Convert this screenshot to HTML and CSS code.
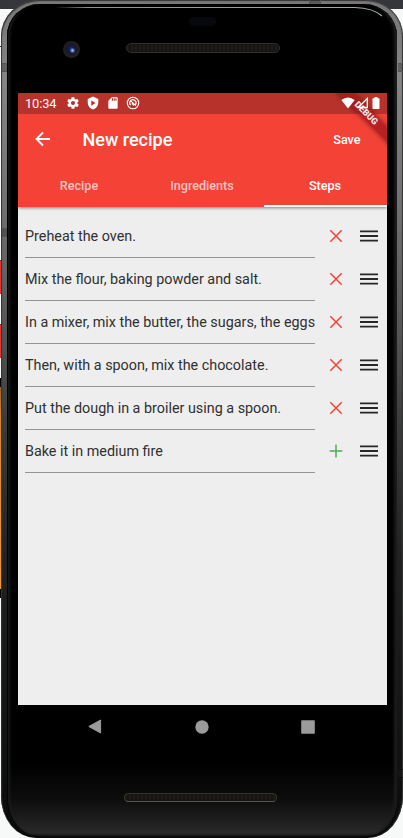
FILE: index.html
```html
<!DOCTYPE html>
<html lang="en">
<head>
<meta charset="utf-8">
<title>New recipe</title>
<link rel="stylesheet" href="styles.css">
</head>
<body>
<svg width="0" height="0" class="defs" aria-hidden="true">
  <symbol id="clear" viewBox="0 0 14 14"><path d="M1.3 1.3 12.7 12.7M12.7 1.3 1.3 12.7" fill="none" stroke="currentColor" stroke-width="1.5"/></symbol>
  <symbol id="add" viewBox="0 0 14 14"><path d="M.6 7H13.4M7 .6V13.4" fill="none" stroke="currentColor" stroke-width="1.5"/></symbol>
  <symbol id="drag" viewBox="0 0 18 12"><path d="M0 1.3H18M0 6H18M0 10.7H18" fill="none" stroke="currentColor" stroke-width="1.8"/></symbol>
</svg>
<div class="desktop">
  <i class="behind top-strip"></i>
  <i class="behind mark"></i>
  <i class="behind red-one"></i>
  <i class="behind red-two"></i>
  <i class="behind photo"></i>
</div>
<div class="phone">
  <i class="seam seam-top"></i><i class="seam seam-left"></i><i class="seam seam-left low"></i><i class="seam seam-right"></i><i class="seam seam-right low"></i>
  <div class="face">
    <svg class="glare" width="390" height="30" viewBox="0 0 390 30" aria-hidden="true">
      <defs><linearGradient id="gl" x1="48" x2="376" y1="0" y2="0" gradientUnits="userSpaceOnUse"><stop offset="0" stop-color="#8a9292" stop-opacity="0"/><stop offset=".1" stop-color="#8a9292"/><stop offset="1" stop-color="#a0aaaa"/></linearGradient></defs>
      <path d="M48 2.5H348Q366 3 375 11" fill="none" stroke="url(#gl)" stroke-width="1.2"/>
    </svg>
    <i class="sensor"></i>
    <i class="camera"></i>
    <i class="speaker speaker-top"></i>
    <i class="speaker speaker-bottom"></i>
    <main class="screen">
      <header>
        <div class="status">
          <span class="clock">10:34</span>
          <svg class="st" width="14" height="14" viewBox="0 0 24 24"><path fill="#fff" d="M19.4 13a7.500 7.500 0 0 0 0-2l2.100-1.600c.2-.2.3-.4.100-.7l-2-3.400c-.1-.3-.4-.3-.6-.3l-2.500 1c-.5-.4-1.100-.7-1.700-1l-.4-2.600c0-.3-.2-.4-.4-.4h-4c-.3 0-.4.1-.5.4L9.100 5c-.6.300-1.200.6-1.700 1L5 5c-.3-.1-.5 0-.6.2l-2 3.500c-.2.300-.1.500.1.700L4.600 11a7.500 7.500 0 0 0 0 2l-2.100 1.600c-.2.2-.3.400-.1.700l2 3.400c.1.300.3.300.6.3l2.400-1c.5.400 1.100.7 1.700 1l.4 2.600c.1.300.2.400.5.400h4c.2 0 .4-.1.400-.4l.4-2.600c.6-.3 1.200-.6 1.700-1l2.500 1c.2 0 .5 0 .6-.3l2-3.400c.2-.3.1-.5-.1-.7zM12 15.500a3.500 3.500 0 1 1 0-7 3.500 3.500 0 0 1 0 7z"/></svg>
          <svg class="st" width="14" height="14" viewBox="0 0 24 24"><path fill="#fff" fill-rule="evenodd" d="M12 1 3 5v6c0 5.500 3.800 10.700 9 12 5.200-1.300 9-6.500 9-12V5zM9 7.500 16.500 12 9 16.500z"/></svg>
          <svg class="st" width="14" height="14" viewBox="0 0 24 24"><path fill="#fff" fill-rule="evenodd" d="M18 2h-8L4 8v12c0 1.100.9 2 2 2h12c1.100 0 2-.9 2-2V4c0-1.100-.9-2-2-2zm-6 6h-2V4h2zm3 0h-2V4h2zm3 0h-2V4h2z"/></svg>
          <svg class="st" width="14" height="14" viewBox="0 0 24 24"><g fill="none" stroke="#fff"><circle cx="12" cy="12" r="9.800" stroke-width="2"/><path d="M8 15.500A5.300 5.300 0 1 1 15.500 15.500M7.500 8l9.500 8.500M10 12.500l3.500 3.500" stroke-width="2"/></g></svg>
          <span class="signals">
            <svg width="14" height="12" viewBox="0 0 14 12"><path fill="#fff" d="M.3 3Q7-2.200 13.700 3L7 11.600z"/></svg>
            <svg width="13" height="12" viewBox="0 0 13 12"><path fill="none" stroke="#fff" stroke-width="1.300" d="M11.300 1.500V10.500H2.300z"/></svg>
            <svg width="8" height="12" viewBox="0 0 8 12"><path fill="#fff" d="M2.500 0h3v1.200h1.300q.7 0 .7.700v9.300q0 .8-.7.800H1.200q-.7 0-.7-.8V1.900q0-.7.700-.7h1.300z"/></svg>
          </span>
        </div>
        <div class="appbar">
          <svg class="back" width="16" height="16" viewBox="0 0 16 16"><path d="M15 8H2M8 1.500 1.500 8 8 14.500" fill="none" stroke="#fff" stroke-width="1.800"/></svg>
          <h1>New recipe</h1>
          <span class="save">Save</span>
        </div>
        <nav class="tabs"><span>Recipe</span><span>Ingredients</span><span class="active">Steps</span></nav>
        <div class="ribbon"><span>DEBUG</span></div>
      </header>
      <ul class="steps">
        <li><span class="field">Preheat the oven.</span><svg class="act"><use href="#clear"/></svg><svg class="drag"><use href="#drag"/></svg></li>
        <li><span class="field">Mix the flour, baking powder and salt.</span><svg class="act"><use href="#clear"/></svg><svg class="drag"><use href="#drag"/></svg></li>
        <li><span class="field">In a mixer, mix the butter, the sugars, the eggs</span><svg class="act"><use href="#clear"/></svg><svg class="drag"><use href="#drag"/></svg></li>
        <li><span class="field">Then, with a spoon, mix the chocolate.</span><svg class="act"><use href="#clear"/></svg><svg class="drag"><use href="#drag"/></svg></li>
        <li><span class="field">Put the dough in a broiler using a spoon.</span><svg class="act"><use href="#clear"/></svg><svg class="drag"><use href="#drag"/></svg></li>
        <li><span class="field">Bake it in medium fire</span><svg class="act add"><use href="#add"/></svg><svg class="drag"><use href="#drag"/></svg></li>
      </ul>
    </main>
    <div class="navkeys">
      <svg width="14" height="15" viewBox="0 0 14 15"><path d="M.8 7.500 12.600 1v13z" fill="#9b9b9b" stroke="#9b9b9b" stroke-linejoin="round"/></svg>
      <svg width="14" height="14" viewBox="0 0 14 14"><circle cx="7" cy="7" r="6.700" fill="#9b9b9b"/></svg>
      <svg width="14" height="14" viewBox="0 0 14 14"><rect x=".2" y=".2" width="13.600" height="13.600" rx=".8" fill="#9b9b9b"/></svg>
    </div>
  </div>
</div>
</body>
</html>
```

FILE: styles.css
```css
* { box-sizing: border-box; }
body {
  margin: 0;
  width: 403px;
  height: 838px;
  overflow: hidden;
  position: relative;
  background: #f7f8f8;
  font-family: Roboto, "Liberation Sans", sans-serif;
}
.defs { position: absolute; }
.desktop { position: absolute; inset: 0; }
.behind { position: absolute; left: 0; width: 8px; }
.top-strip { top: 0; width: 403px; height: 9px; background: #35363b; }
.mark { top: 46px; height: 1px; background: #333; }
.red-one { top: 260px; height: 34px; background: #dc3838; border-top: 1px solid #8c2525; }
.red-two { top: 324px; height: 34px; background: #dc3838; border-top: 1px solid #8c2525; }
.photo { top: 378px; height: 220px; background: linear-gradient(#996024, #df8426 30px, #f09a32); border-top: 9px solid #050505; border-bottom: 9px solid #050505; }

.phone {
  position: relative;
  width: 402px;
  height: 838px;
  margin-left: 1px;
  padding: 4px 6px 1px;
  border-radius: 38px 38px 35px 35px / 36px 36px 42px 42px;
  background: linear-gradient(#777 0, #858585 80px, #707070 210px, #555 330px, #3b3d3d 420px, #202222 560px, #151717 700px, #090909 838px);
  box-shadow: inset 1px 1px 1px #333, inset -1px 0 1px #333;
}
.seam { position: absolute; background: rgba(35, 35, 35, .35); border: 0 solid #555; }
.seam-top { left: 308px; top: 0; width: 12px; height: 4px; border-width: 0 1px; }
.seam-left { left: 1px; top: 63px; width: 5px; height: 9px; border-width: 1px 0; }
.seam-left.low { top: 228px; }
.seam-right { right: 0; top: 63px; width: 5px; height: 9px; border-width: 1px 0; }
.seam-right.low { top: 769px; border-color: #111; }

.face {
  position: relative;
  height: 833px;
  padding: 89px 10px 0 11px;
  border-radius: 33px 33px 31px 31px / 32px 32px 38px 38px;
  background: linear-gradient(#000 0, #000 760px, #0d0d0d 795px, #292929 829px, #111 833px);
  box-shadow: inset 1px 0 1px #000, inset 5px 0 3px -2px #1c1c1c, inset -5px 0 3px -2px #1c1c1c, inset 0 -1px 1px #080808;
}
.glare { position: absolute; left: 0; top: 1px; }
.sensor { position: absolute; left: 182px; top: 13px; width: 27px; height: 9px; border-radius: 5px; background: #07080d; }
.camera {
  position: absolute; left: 56px; top: 37px; width: 17px; height: 17px; border-radius: 50%;
  background: radial-gradient(circle at 9.500px 9.500px, #b8c8ff 0, #5266c8 1.5px, transparent 3px), radial-gradient(circle at 8px 8px, #1c2878 0, #111541 4px, #1c1b1c 5px, #242223 8px);
}
.speaker {
  position: absolute; height: 10px; width: 154px; border-radius: 5px; border: 1px solid #302e2c;
  background: repeating-linear-gradient(90deg, #211d1a 0, #211d1a 2px, #171411 2px, #171411 4px);
  box-shadow: inset 0 0 2px 1px #171615;
}
.speaker-top { left: 119px; top: 39px; }
.speaker-bottom { left: 117px; top: 789px; height: 9px; width: 153px; border-color: #333428 #3a3a34 #55554e; }

.screen { width: 369px; height: 612px; background: #eee; overflow: hidden; }
header { position: relative; height: 114px; background: #f44336; color: #fff; box-shadow: 0 1px 3px rgba(0, 0, 0, .45); }
.status { display: flex; align-items: center; height: 21px; padding: 0 7px; background: #b7322a; }
.clock { width: 41px; font-size: 12.800px; letter-spacing: -.1px; }
.st { flex: none; margin: 0 6px 1px 0; }
.signals { position: relative; z-index: 1; display: flex; gap: 3px; margin: 0 0 1px auto; }
.signals svg:nth-child(2) { margin-left: -2px; }
.appbar { display: flex; align-items: center; height: 51px; padding: 0 26.500px 0 17px; }
.back { margin-bottom: 1px; }
h1 { margin: 0 0 0 31.500px; font-size: 18px; line-height: 22px; font-weight: 500; }
.save { margin-left: auto; font-size: 12.600px; font-weight: 500; }
.tabs { display: grid; grid-template-columns: repeat(3, 1fr); height: 42px; font-size: 12.600px; font-weight: 500; color: rgba(255, 255, 255, .7); }
.tabs span { display: flex; align-items: center; justify-content: center; padding: 0 1px 1px 0; }
.tabs .active { color: #fff; border-bottom: 2px solid #fff; padding-bottom: 0; }
.ribbon { position: absolute; right: 0; top: 0; width: 60px; height: 60px; overflow: hidden; }
.ribbon span {
  position: absolute; left: -11px; top: 15px; width: 100px; height: 11px; transform: rotate(45deg);
  background: rgba(160, 23, 27, .75); box-shadow: 0 0 5px rgba(0, 0, 0, .5);
  font-size: 9px; line-height: 11px; font-weight: 900; text-align: center; color: rgba(255, 255, 255, .88);
}

.steps { list-style: none; margin: 0; padding: 8px 9px 0 7px; }
.steps li { display: flex; align-items: center; height: 43px; }
.field { width: 290px; height: 43px; line-height: 43px; font-size: 14.350px; color: #303030; border-bottom: 1px solid #949494; white-space: nowrap; overflow: hidden; }
.act { width: 14px; height: 14px; margin: 0 0 2px 14px; color: #f44336; }
.act.add { color: #4caf50; }
.drag { width: 18px; height: 12px; margin: 0 0 2px auto; color: #272727; }
.navkeys { display: flex; justify-content: space-between; align-items: center; height: 43px; padding: 0 72px 0 70px; }
```
